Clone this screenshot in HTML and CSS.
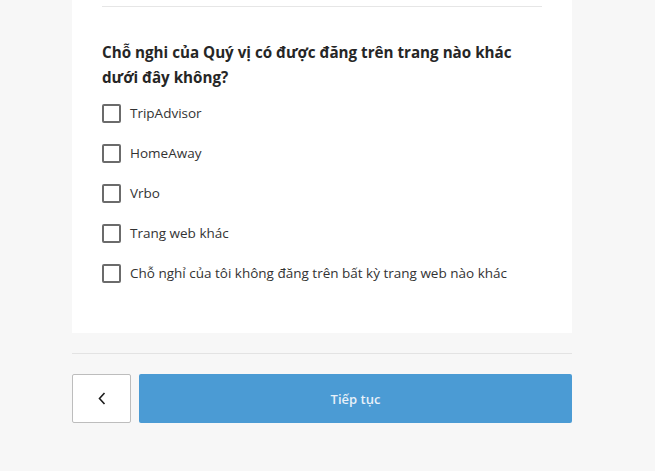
FILE: index.html
```html
<!DOCTYPE html>
<html>
<head>
  <title>Chỗ nghỉ</title>
  <link rel="stylesheet" href="styles.css">
</head>
<body>
  <div class="page">
    <div class="card">
      <hr class="card-rule">
      <h2 class="question">Chỗ nghi của Quý vị có được đăng trên trang nào khác dưới đây không?</h2>

      <ul class="options">
        <li><label class="option"><input type="checkbox"><span class="box"></span>TripAdvisor</label></li>
        <li><label class="option"><input type="checkbox"><span class="box"></span>HomeAway</label></li>
        <li><label class="option"><input type="checkbox"><span class="box"></span>Vrbo</label></li>
        <li><label class="option"><input type="checkbox"><span class="box"></span>Trang web khác</label></li>
        <li><label class="option"><input type="checkbox"><span class="box"></span>Chỗ nghỉ của tôi không đăng trên bất kỳ trang web nào khác</label></li>
      </ul>
    </div>

    <hr class="page-rule">

    <div class="actions">
      <button class="btn-back" type="button" aria-label="Quay lại">
        <svg width="8" height="13" viewBox="0 0 8 13"><path d="M6.5 1 L1.5 6.5 L6.5 12" fill="none" stroke="#1d1d1d" stroke-width="1.6"/></svg>
      </button>
      <button class="btn-next" type="submit">Tiếp tục</button>
    </div>
  </div>
</body>
</html>
```

FILE: styles.css
```css
body {
  margin: 0;
  background-color: #f7f7f7;
  font-family: "Open Sans", "Noto Sans", Arial, sans-serif;
  color: #262626;
}

.page {
  width: 500px;
  margin-left: 72px;
}

.card {
  background-color: #fff;
  padding: 6px 30px 40px;
}

.card-rule {
  margin: 0;
  border: 0;
  border-top: 1px solid #e6e6e6;
}

.question {
  margin: 33px 0 3px;
  font-size: 15.2px;
  font-weight: 700;
  line-height: 25px;
  color: #262626;
}

.options {
  list-style: none;
  margin: 0;
  padding: 0;
}

.option {
  display: flex;
  align-items: center;
  height: 40px;
  font-size: 13.5px;
  color: #333;
  cursor: pointer;
}

.option input {
  display: none;
}

.box {
  width: 15px;
  height: 15px;
  border: 2px solid #6b6b6b;
  border-radius: 2px;
  margin-right: 9px;
  flex-shrink: 0;
}

.page-rule {
  margin: 20px 0 0;
  border: 0;
  border-top: 1px solid #e3e3e3;
}

.actions {
  display: flex;
  gap: 8px;
  margin-top: 20px;
}

.btn-back {
  width: 59px;
  height: 49px;
  background-color: #fff;
  border: 1px solid #bdbdbd;
  border-radius: 2px;
  display: flex;
  align-items: center;
  justify-content: center;
  padding: 0;
  cursor: pointer;
}

.btn-next {
  flex: 1;
  height: 49px;
  background-color: #4b9bd4;
  color: #e8f1f9;
  border: 0;
  border-radius: 2px;
  font-family: inherit;
  font-size: 13px;
  font-weight: 600;
  cursor: pointer;
}
```
